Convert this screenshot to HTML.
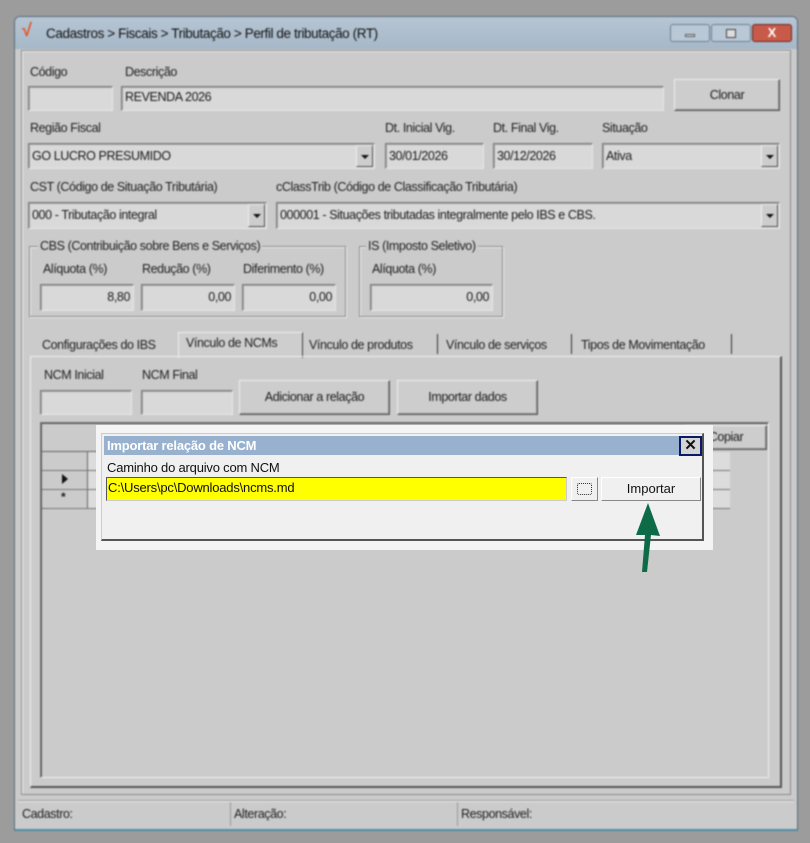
<!DOCTYPE html>
<html><head><meta charset="utf-8"><style>
*{box-sizing:border-box;margin:0;padding:0}
body{width:810px;height:843px;background:#9c9c9c;position:relative;overflow:hidden;font-family:"Liberation Sans",sans-serif;font-size:12px;color:#1a1a1a}
.a{position:absolute}
#bg{position:absolute;left:0;top:0;width:810px;height:843px;filter:blur(0.7px)}
.lbl{position:absolute;font-size:12.5px;letter-spacing:-0.4px;color:#1e1e1e;white-space:nowrap}
.inp{position:absolute;background:#d9d9d9;border:1px solid #7a7a7a;border-right-color:#e8e8e8;border-bottom-color:#e8e8e8;box-shadow:inset 1px 1px 0 #a0a0a0;font-size:12.5px;letter-spacing:-0.4px;padding:3px 3px;white-space:nowrap;overflow:hidden}
.r{text-align:right}
.btn{position:absolute;background:#cdcdcd;border:1px solid #eee;border-right-color:#555;border-bottom-color:#555;box-shadow:inset -1px -1px 0 #8a8a8a;text-align:center;font-size:12.5px;letter-spacing:-0.4px}
.dd{position:absolute;right:1px;top:1px;bottom:1px;width:17px;background:#cdcdcd;border:1px solid #eee;border-right-color:#555;border-bottom-color:#555}
.dd:after{content:"";position:absolute;left:4px;top:9px;border-left:4px solid transparent;border-right:4px solid transparent;border-top:4px solid #111}
.grp{position:absolute;border:1px solid #8c8c8c;box-shadow:1px 1px 0 #eee, inset 1px 1px 0 #eee}
</style></head><body>
<div id="bg">
<!-- window -->
<div class="a" style="left:14px;top:16px;width:784px;height:815px;background:#cbcbcb;border:1px solid #5a6c7c;border-radius:6px 6px 0 0;border-bottom:2px solid #4f8fa8"></div>
<div class="a" style="left:15px;top:17px;width:782px;height:32px;background:linear-gradient(#b5c5d4,#a6b7c7);border-radius:5px 5px 0 0"></div>
<div class="a" style="left:22px;top:20px;font-size:18px;color:#e8501a;font-weight:bold">√</div>
<div class="lbl" style="left:46px;top:26px;font-size:13.5px;color:#111">Cadastros &gt; Fiscais &gt; Tributação &gt; Perfil de tributação (RT)</div>
<div class="a" style="left:670px;top:24px;width:40px;height:18px;border:1px solid #6e8090;border-radius:3px;background:#b9c8d6"><div class="a" style="left:14px;top:9px;width:10px;height:3px;background:#eee;border:1px solid #555"></div></div>
<div class="a" style="left:711px;top:24px;width:40px;height:18px;border:1px solid #6e8090;border-radius:3px;background:#b9c8d6"><div class="a" style="left:14px;top:4px;width:10px;height:9px;border:1px solid #444;background:#ddd"></div></div>
<div class="a" style="left:752px;top:24px;width:40px;height:18px;border:1px solid #6b2a20;border-radius:3px;background:#c85a4a;color:#fff;font-weight:bold;text-align:center;font-size:13px;line-height:16px">X</div>
<div class="a" style="left:21px;top:50px;width:770px;height:745px;border:1px solid #8a8a8a;box-shadow:inset 1px 1px 0 #eee"></div>

<div class="lbl" style="left:30px;top:65px">Código</div>
<div class="lbl" style="left:125px;top:65px">Descrição</div>
<div class="inp" style="left:28px;top:86px;width:85px;height:25px"></div>
<div class="inp" style="left:121px;top:86px;width:543px;height:25px">REVENDA 2026</div>
<div class="btn" style="left:674px;top:79px;width:106px;height:32px;line-height:30px">Clonar</div>

<div class="lbl" style="left:30px;top:121px">Região Fiscal</div>
<div class="lbl" style="left:385px;top:121px">Dt. Inicial Vig.</div>
<div class="lbl" style="left:493px;top:121px">Dt. Final Vig.</div>
<div class="lbl" style="left:602px;top:121px">Situação</div>
<div class="inp" style="left:28px;top:143px;width:347px;height:26px;padding-top:5px">GO LUCRO PRESUMIDO<div class="dd"></div></div>
<div class="inp" style="left:385px;top:143px;width:99px;height:26px;padding-top:5px">30/01/2026</div>
<div class="inp" style="left:493px;top:143px;width:100px;height:26px;padding-top:5px">30/12/2026</div>
<div class="inp" style="left:602px;top:143px;width:178px;height:26px;padding-top:5px">Ativa<div class="dd"></div></div>

<div class="lbl" style="left:30px;top:180px">CST (Código de Situação Tributária)</div>
<div class="lbl" style="left:276px;top:180px">cClassTrib (Código de Classificação Tributária)</div>
<div class="inp" style="left:28px;top:202px;width:239px;height:27px;padding-top:5px">000 - Tributação integral<div class="dd"></div></div>
<div class="inp" style="left:276px;top:202px;width:504px;height:27px;padding-top:5px">000001 - Situações tributadas integralmente pelo IBS e CBS.<div class="dd"></div></div>

<div class="grp" style="left:29px;top:246px;width:317px;height:71px"></div>
<div class="lbl" style="left:38px;top:239px;background:#cbcbcb;padding:0 2px">CBS (Contribuição sobre Bens e Serviços)</div>
<div class="lbl" style="left:43px;top:262px">Alíquota (%)</div>
<div class="lbl" style="left:142px;top:262px">Redução (%)</div>
<div class="lbl" style="left:243px;top:262px">Diferimento (%)</div>
<div class="inp r" style="left:40px;top:284px;width:94px;height:27px;padding-top:5px">8,80</div>
<div class="inp r" style="left:141px;top:284px;width:94px;height:27px;padding-top:5px">0,00</div>
<div class="inp r" style="left:242px;top:284px;width:94px;height:27px;padding-top:5px">0,00</div>
<div class="grp" style="left:359px;top:246px;width:144px;height:71px"></div>
<div class="lbl" style="left:366px;top:239px;background:#cbcbcb;padding:0 2px">IS (Imposto Seletivo)</div>
<div class="lbl" style="left:372px;top:262px">Alíquota (%)</div>
<div class="inp r" style="left:370px;top:284px;width:123px;height:27px;padding-top:5px">0,00</div>

<!-- tabs -->
<div class="lbl" style="left:42px;top:338px">Configurações do IBS</div>
<div class="a" style="left:178px;top:332px;width:125px;height:26px;background:#cecece;border:1px solid #eee;border-right:1px solid #444;border-bottom:none"></div>
<div class="lbl" style="left:186px;top:336px">Vínculo de NCMs</div>
<div class="lbl" style="left:309px;top:338px">Vínculo de produtos</div>
<div class="a" style="left:437px;top:334px;width:1px;height:20px;background:#333"></div>
<div class="lbl" style="left:446px;top:338px">Vínculo de serviços</div>
<div class="a" style="left:571px;top:334px;width:1px;height:20px;background:#333"></div>
<div class="lbl" style="left:581px;top:338px">Tipos de Movimentação</div>
<div class="a" style="left:731px;top:334px;width:1px;height:20px;background:#333"></div>
<div class="a" style="left:30px;top:356px;width:752px;height:432px;border:1px solid #eee;border-right:2px solid #555;border-bottom:2px solid #555"></div>

<div class="lbl" style="left:44px;top:368px">NCM Inicial</div>
<div class="lbl" style="left:142px;top:368px">NCM Final</div>
<div class="inp" style="left:40px;top:390px;width:92px;height:25px"></div>
<div class="inp" style="left:141px;top:390px;width:92px;height:25px"></div>
<div class="btn" style="left:239px;top:380px;width:151px;height:35px;line-height:33px">Adicionar a relação</div>
<div class="btn" style="left:397px;top:380px;width:141px;height:35px;line-height:33px">Importar dados</div>

<div class="a" style="left:40px;top:422px;width:729px;height:356px;border:1px solid #777;border-right-color:#eee;border-bottom-color:#eee;box-shadow:inset 1px 1px 0 #555"></div>
<div class="a" style="left:42px;top:424px;width:643px;height:28px;background:#cbcbcb;border-bottom:1px solid #666;text-align:center;padding-top:4px;font-size:12.5px">Relação de NCM</div>
<div class="btn" style="left:685px;top:425px;width:82px;height:25px;line-height:23px">Copiar</div>
<div class="a" style="left:42px;top:452px;width:688px;height:57px;background:#dcdcdc"></div>
<div class="a" style="left:42px;top:452px;width:46px;height:57px;background:#cbcbcb;border-right:1px solid #666"></div>
<div class="a" style="left:42px;top:470px;width:688px;height:1px;background:#777"></div>
<div class="a" style="left:42px;top:489px;width:688px;height:1px;background:#777"></div>
<div class="a" style="left:42px;top:508px;width:688px;height:1px;background:#777"></div>
<div class="a" style="left:62px;top:474px;border-top:5px solid transparent;border-bottom:5px solid transparent;border-left:6px solid #111"></div>
<div class="a" style="left:61px;top:490px;font-size:12px;font-weight:bold">*</div>

<!-- status -->
<div class="a" style="left:18px;top:800px;width:776px;height:28px;border-top:1px solid #999;box-shadow:inset 0 1px 0 #eee"></div>
<div class="a" style="left:230px;top:802px;width:1px;height:24px;background:#999"></div>
<div class="a" style="left:457px;top:802px;width:1px;height:24px;background:#999"></div>
<div class="lbl" style="left:22px;top:807px">Cadastro:</div>
<div class="lbl" style="left:234px;top:807px">Alteração:</div>
<div class="lbl" style="left:461px;top:807px">Responsável:</div>
</div>

<!-- dialog -->
<div class="a" style="left:96px;top:425px;width:617px;height:125px;background:#f4f4f4"></div>
<div class="a" style="left:101px;top:433px;width:603px;height:108px;background:#f0f0f0;border:1px solid #ccc;border-right:2px solid #555;border-bottom:2px solid #555"></div>
<div class="a" style="left:104px;top:436px;width:578px;height:19px;background:#97b1cf;color:#fff;font-weight:bold;font-size:13px;padding:2px 3px;letter-spacing:-0.2px">Importar relação de NCM</div>
<div class="a" style="left:679px;top:436px;width:23px;height:20px;border:2px solid #0a1a6a;background:#d4d4d4;text-align:center;font-size:15px;line-height:15px;font-weight:bold;color:#111">✕</div>
<div class="a" style="left:107px;top:460px;font-size:13px;letter-spacing:-0.2px;color:#111">Caminho do arquivo com NCM</div>
<div class="a" style="left:106px;top:477px;width:461px;height:24px;background:#ffff00;border:1px solid #555;border-right-color:#ccc;border-bottom-color:#ccc;font-size:13px;padding:2px 1px;color:#111;letter-spacing:-0.2px">C:\Users\pc\Downloads\ncms.md</div>
<div class="a" style="left:571px;top:477px;width:27px;height:24px;background:#f0f0f0;border:1px solid #fff;border-right-color:#888;border-bottom-color:#888"><div class="a" style="left:5px;top:5px;width:15px;height:12px;border:1px dotted #333;border-radius:2px"></div></div>
<div class="a" style="left:601px;top:477px;width:100px;height:24px;background:#f0f0f0;border:1px solid #fff;border-right-color:#888;border-bottom-color:#888;text-align:center;font-size:13px;line-height:22px;color:#111">Importar</div>

<svg class="a" style="left:0;top:0" width="810" height="843"><path d="M648 503 L660 536 L651 535 L647 572 L642 572 L645 535 L636 535 Z" fill="#0e6b48"/></svg>
</body></html>
